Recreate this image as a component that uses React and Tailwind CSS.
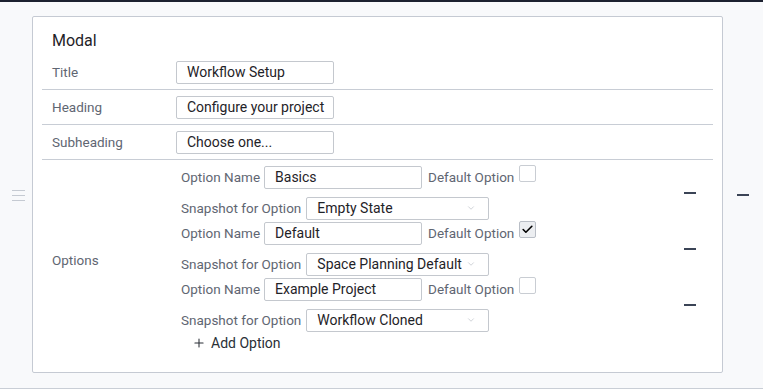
import { Plus, ChevronDown, Check } from 'lucide-react'

const font = { fontFamily: 'Roboto, "Liberation Sans", sans-serif' }

function TextBox({ value, className = '' }) {
  return (
    <div className={`h-[23px] w-[158px] border border-[#c4c8ce] rounded-[2px] bg-white pl-[10px] pr-[2px] flex items-center whitespace-nowrap overflow-hidden text-[14px] text-[#1f2328] ${className}`}>
      {value}
    </div>
  )
}

function Select({ value }) {
  return (
    <div className="ml-[5px] h-[23px] w-[183px] border border-[#c4c8ce] rounded-[2px] bg-white pl-[10px] pr-[12px] flex items-center justify-between text-[14px] text-[#1f2328]">
      <span className="whitespace-nowrap">{value}</span>
      <ChevronDown className="w-[10px] h-[10px] text-[#b4b9c0] shrink-0" strokeWidth={1.5} />
    </div>
  )
}

function Minus({ className = '' }) {
  return <div className={`w-[12px] h-[2px] bg-[#3b4456] ${className}`} />
}

function Row({ label, value }) {
  return (
    <div className="h-[35px] border-b border-[#c8cdd5] px-[10px] flex items-center">
      <div className="w-[124px] text-[13.5px] text-[#5f6672]">{label}</div>
      <TextBox value={value} />
    </div>
  )
}

function OptionBlock({ name, snapshot, checked }) {
  return (
    <div className="flex items-center justify-between h-[56px]">
      <div className="flex flex-col self-start">
        <div className="flex items-center h-[23px] text-[13.5px] text-[#5f6672] whitespace-nowrap">
          <span>Option Name</span>
          <TextBox value={name} className="ml-[4px]" />
          <span className="ml-[6px]">Default Option</span>
          <div
            className={`ml-[5px] self-start -mt-[1px] w-[17px] h-[17px] border rounded-[2px] flex items-center justify-center ${checked ? 'bg-[#eceef1] border-[#b9bec6]' : 'bg-white border-[#c9cdd3]'}`}
          >
            {checked && <Check className="w-[13px] h-[13px] text-black" strokeWidth={3} />}
          </div>
        </div>
        <div className="mt-[8px] flex items-center h-[22px] text-[13.5px] text-[#5f6672] whitespace-nowrap">
          <span>Snapshot for Option</span>
          <Select value={snapshot} />
        </div>
      </div>
      <Minus className="mr-[7px] -mt-[2px]" />
    </div>
  )
}

export default function App() {
  return (
    <div style={font} className="w-[763px] h-[389px] bg-[#f8f9fb] border-t-2 border-b border-t-[#1c2130] border-b-[#c9ced6] pt-[14px] flex items-start">
      <div className="w-[32px] self-stretch flex items-center pb-[15px]">
        <div className="ml-[12px] w-[13px] flex flex-col gap-[4px] pt-[1px]">
          <div className="h-px bg-[#c5cad2]" />
          <div className="h-px bg-[#c5cad2]" />
          <div className="h-px bg-[#c5cad2]" />
        </div>
      </div>

      <div className="w-[691px] h-[357px] bg-white border border-[#c5cad3] rounded-[2px] px-[9px]">
        <div className="pt-[14px] pb-[4px] px-[10px] text-[16px] leading-[20px] text-[#1f2328]">Modal</div>
        <Row label="Title" value="Workflow Setup" />
        <Row label="Heading" value="Configure your project" />
        <Row label="Subheading" value="Choose one..." />

        <div className="px-[10px] pt-[6px] flex items-center">
          <div className="w-[129px] text-[13.5px] text-[#5f6672] mt-[2px]">Options</div>
          <div className="flex-1 flex flex-col">
            <OptionBlock name="Basics" snapshot="Empty State" />
            <OptionBlock name="Default" snapshot="Space Planning Default" checked />
            <OptionBlock name="Example Project" snapshot="Workflow Cloned" />
            <div className="-mt-[1px] ml-[11px] flex items-center gap-[5px] h-[20px] text-[14px] text-[#2a2f36]">
              <Plus className="w-[14px] h-[14px] text-[#2a2f36]" strokeWidth={1.8} />
              <span>Add Option</span>
            </div>
          </div>
        </div>
      </div>

      <div className="w-[40px] self-stretch flex items-center justify-center pb-[15px]">
        <Minus />
      </div>
    </div>
  )
}
